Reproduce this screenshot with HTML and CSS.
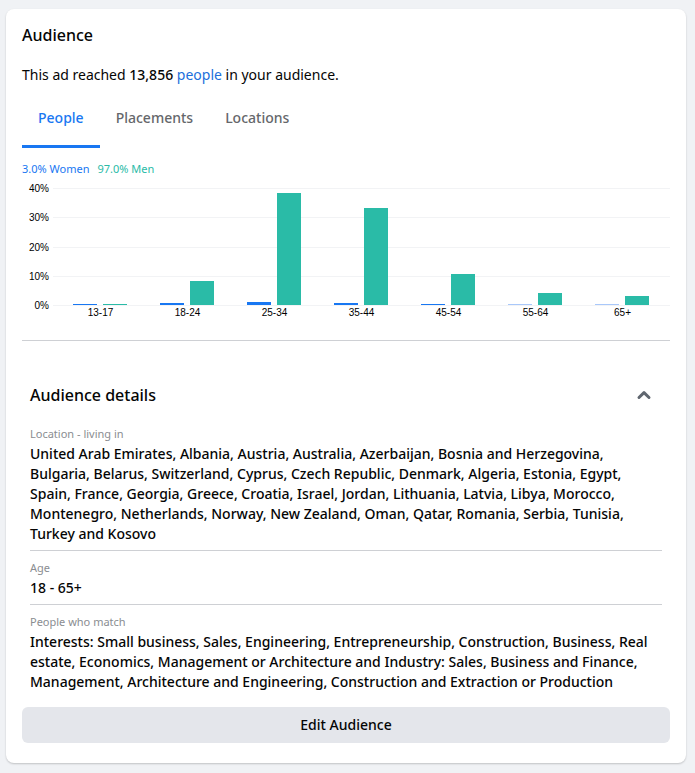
FILE: index.html
```html
<!DOCTYPE html>
<html lang="en">
<head>
<meta charset="utf-8">
<meta name="viewport" content="width=device-width, initial-scale=1">
<title>Audience</title>
<link rel="stylesheet" href="styles.css">
</head>
<body>
<main class="card">
  <h1 class="title">Audience</h1>
  <p class="summary">This ad reached <strong>13,856</strong> <a href="#people">people</a> in your audience.</p>
  <div class="tabs" role="tablist">
    <button class="tab tab-active" role="tab" aria-selected="true">People</button>
    <button class="tab" role="tab" aria-selected="false">Placements</button>
    <button class="tab" role="tab" aria-selected="false">Locations</button>
  </div>
  <section class="results" id="people">
    <div class="legend"><span class="women-text">3.0% Women</span><span class="men-text">97.0% Men</span></div>
    <div class="chart">
      <div class="axis"><span>40%</span><span>30%</span><span>20%</span><span>10%</span><span>0%</span></div>
      <div class="plot">
        <div class="gridlines"><i></i><i></i><i></i><i></i><i></i></div>
        <div class="groups">
          <div class="group"><i class="bar women" style="height:1%"></i><i class="bar men" style="height:1%"></i></div>
          <div class="group"><i class="bar women" style="height:1.4%"></i><i class="bar men" style="height:20.4%"></i></div>
          <div class="group"><i class="bar women" style="height:3%"></i><i class="bar men" style="height:96%"></i></div>
          <div class="group"><i class="bar women" style="height:2%"></i><i class="bar men" style="height:83%"></i></div>
          <div class="group"><i class="bar women" style="height:1%"></i><i class="bar men" style="height:26.5%"></i></div>
          <div class="group"><i class="bar women faint" style="height:1%"></i><i class="bar men" style="height:10.2%"></i></div>
          <div class="group"><i class="bar women faint" style="height:1%"></i><i class="bar men" style="height:7.7%"></i></div>
        </div>
      </div>
      <div class="ages"><span>13-17</span><span>18-24</span><span>25-34</span><span>35-44</span><span>45-54</span><span>55-64</span><span>65+</span></div>
    </div>
  </section>
  <section class="details">
    <header class="details-head">
      <h2 class="title">Audience details</h2>
      <button class="toggle" aria-label="Collapse audience details">
        <svg width="16" height="16" viewBox="0 0 16 16"><path d="M3 10.5 8 5.7 13 10.5" fill="none" stroke="#606770" stroke-width="3" stroke-linecap="round" stroke-linejoin="round"/></svg>
      </button>
    </header>
    <dl class="list">
      <div class="item">
        <dt>Location - living in</dt>
        <dd>United Arab Emirates, Albania, Austria, Australia, Azerbaijan, Bosnia and Herzegovina,<br>Bulgaria, Belarus, Switzerland, Cyprus, Czech Republic, Denmark, Algeria, Estonia, Egypt,<br>Spain, France, Georgia, Greece, Croatia, Israel, Jordan, Lithuania, Latvia, Libya, Morocco,<br>Montenegro, Netherlands, Norway, New Zealand, Oman, Qatar, Romania, Serbia, Tunisia,<br>Turkey and Kosovo</dd>
      </div>
      <div class="item">
        <dt>Age</dt>
        <dd>18 - 65+</dd>
      </div>
      <div class="item">
        <dt>People who match</dt>
        <dd>Interests: Small business, Sales, Engineering, Entrepreneurship, Construction, Business, Real<br>estate, Economics, Management or Architecture and Industry: Sales, Business and Finance,<br>Management, Architecture and Engineering, Construction and Extraction or Production</dd>
      </div>
    </dl>
  </section>
  <button class="edit">Edit Audience</button>
</main>
</body>
</html>
```
FILE: styles.css
```css
* { box-sizing: border-box; }
body {
  margin: 0;
  padding: 9px 9px 10px 6px;
  background: #f0f2f5;
  color: #050505;
  font: 14px/20px "Segoe UI", "Noto Sans", sans-serif;
}
h1, h2, p, dl, dd { margin: 0; }
button { border: 0; background: none; font: inherit; color: inherit; cursor: pointer; }
a { color: #216fdb; text-decoration: none; }
.card {
  padding: 16px 16px 20px;
  background: #fff;
  border-radius: 8px;
  box-shadow: 0 1px 2px rgba(0, 0, 0, 0.2);
}
.title { font-size: 16px; line-height: 20px; font-weight: 500; }
.summary { margin-top: 20px; }
.summary strong { font-weight: 500; }
.tabs { display: flex; margin-top: 3px; }
.tab {
  height: 60px;
  padding: 0 16px;
  border-top: 3px solid transparent;
  border-bottom: 3px solid transparent;
  color: #65676b;
  font-weight: 500;
}
.tab-active { color: #1877f2; border-bottom-color: #1877f2; }
.results { padding: 13px 0 21px; border-bottom: 1px solid #ced0d4; }
.legend { display: flex; gap: 8px; font-size: 11px; line-height: 16px; }
.women-text { color: #1877f2; }
.men-text { color: #2abba7; }
.chart {
  display: grid;
  grid-template-columns: 31px 1fr;
  margin-top: 11px;
  font: 10px/12px "Liberation Sans", Arial, sans-serif;
  color: #000;
}
.axis {
  display: flex;
  flex-direction: column;
  justify-content: space-between;
  height: 129px;
  margin: -5px 0;
  padding-right: 4px;
  text-align: right;
}
.plot { display: grid; height: 118px; }
.gridlines, .groups { grid-area: 1 / 1; }
.gridlines { display: flex; flex-direction: column; justify-content: space-between; }
.gridlines i { height: 1px; background: #f2f3f5; }
.groups {
  display: grid;
  grid-template-columns: repeat(7, 1fr);
  height: 117px;
  padding: 0 5px 0 3px;
}
.group { display: flex; align-items: flex-end; justify-content: center; gap: 6px; height: 117px; }
.bar { width: 24px; }
.women { background: #1877f2; }
.men { background: #2abba7; }
.faint { background: #a9c8fa; }
.ages {
  grid-column: 2;
  display: grid;
  grid-template-columns: repeat(7, 1fr);
  padding: 0 4px;
  text-align: center;
}
.details { padding: 36px 8px 0; }
.details-head { display: flex; justify-content: space-between; align-items: center; height: 36px; }
.toggle { display: grid; place-items: center; width: 36px; height: 36px; padding: 0; }
.list { padding-top: 11px; }
.item { padding: 7px 0 6px; border-bottom: 1px solid #ced0d4; }
.item:first-child { padding-top: 0; }
.item:last-child { border-bottom: 0; }
dt { color: #8a8d91; font-size: 11px; line-height: 20px; }
dd { font-weight: 500; }
.edit {
  display: block;
  width: 100%;
  height: 36px;
  margin-top: 9px;
  border-radius: 6px;
  background: #e4e6eb;
  font-weight: 500;
}
```
